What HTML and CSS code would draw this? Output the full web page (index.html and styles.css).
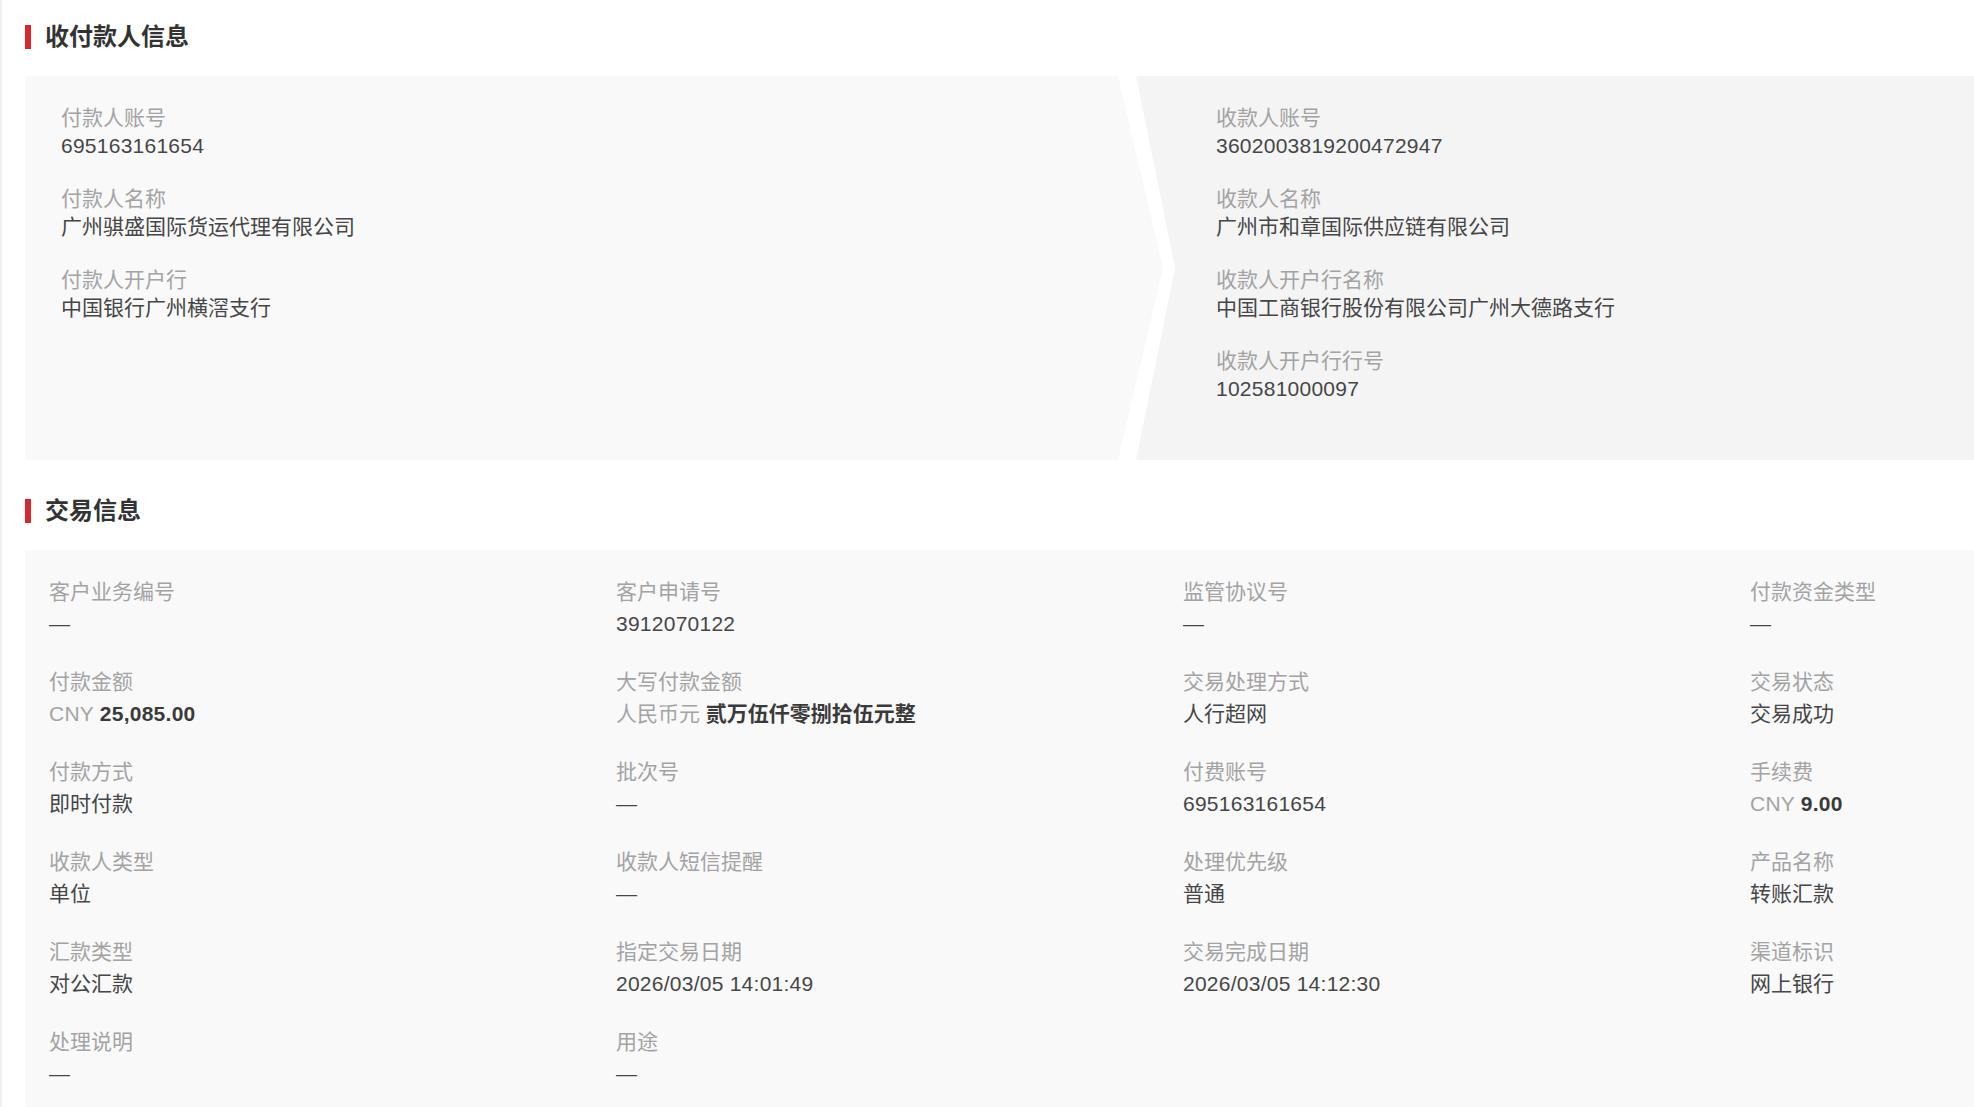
FILE: index.html
```html
<!DOCTYPE html>
<html lang="zh-CN">
<head>
<meta charset="utf-8">
<title>交易详情</title>
<link rel="stylesheet" href="styles.css">
</head>
<body>
<div class="page">
  <h2 class="section-title"><span class="bar"></span>收付款人信息</h2>
  <div class="parties">
    <div class="party party-payer">
      <div class="field"><div class="label">付款人账号</div><div class="value num">695163161654</div></div>
      <div class="field"><div class="label">付款人名称</div><div class="value">广州骐盛国际货运代理有限公司</div></div>
      <div class="field"><div class="label">付款人开户行</div><div class="value">中国银行广州横滘支行</div></div>
    </div>
    <div class="party party-payee">
      <div class="field"><div class="label">收款人账号</div><div class="value num">3602003819200472947</div></div>
      <div class="field"><div class="label">收款人名称</div><div class="value">广州市和章国际供应链有限公司</div></div>
      <div class="field"><div class="label">收款人开户行名称</div><div class="value">中国工商银行股份有限公司广州大德路支行</div></div>
      <div class="field"><div class="label">收款人开户行行号</div><div class="value num">102581000097</div></div>
    </div>
  </div>

  <h2 class="section-title second"><span class="bar"></span>交易信息</h2>
  <div class="trade">
    <div class="cell"><div class="t-label">客户业务编号</div><div class="t-value">—</div></div>
    <div class="cell"><div class="t-label">客户申请号</div><div class="t-value num">3912070122</div></div>
    <div class="cell"><div class="t-label">监管协议号</div><div class="t-value">—</div></div>
    <div class="cell"><div class="t-label">付款资金类型</div><div class="t-value">—</div></div>

    <div class="cell"><div class="t-label">付款金额</div><div class="t-value num"><span class="muted">CNY</span> <b>25,085.00</b></div></div>
    <div class="cell"><div class="t-label">大写付款金额</div><div class="t-value"><span class="muted">人民币元</span> <b>贰万伍仟零捌拾伍元整</b></div></div>
    <div class="cell"><div class="t-label">交易处理方式</div><div class="t-value">人行超网</div></div>
    <div class="cell"><div class="t-label">交易状态</div><div class="t-value">交易成功</div></div>

    <div class="cell"><div class="t-label">付款方式</div><div class="t-value">即时付款</div></div>
    <div class="cell"><div class="t-label">批次号</div><div class="t-value">—</div></div>
    <div class="cell"><div class="t-label">付费账号</div><div class="t-value num">695163161654</div></div>
    <div class="cell"><div class="t-label">手续费</div><div class="t-value num"><span class="muted">CNY</span> <b>9.00</b></div></div>

    <div class="cell"><div class="t-label">收款人类型</div><div class="t-value">单位</div></div>
    <div class="cell"><div class="t-label">收款人短信提醒</div><div class="t-value">—</div></div>
    <div class="cell"><div class="t-label">处理优先级</div><div class="t-value">普通</div></div>
    <div class="cell"><div class="t-label">产品名称</div><div class="t-value">转账汇款</div></div>

    <div class="cell"><div class="t-label">汇款类型</div><div class="t-value">对公汇款</div></div>
    <div class="cell"><div class="t-label">指定交易日期</div><div class="t-value num">2026/03/05 14:01:49</div></div>
    <div class="cell"><div class="t-label">交易完成日期</div><div class="t-value num">2026/03/05 14:12:30</div></div>
    <div class="cell"><div class="t-label">渠道标识</div><div class="t-value">网上银行</div></div>

    <div class="cell"><div class="t-label">处理说明</div><div class="t-value">—</div></div>
    <div class="cell"><div class="t-label">用途</div><div class="t-value">—</div></div>
  </div>
</div>
</body>
</html>
```

FILE: styles.css
```css
html {
  overflow: hidden;
  background: #fff;
}

body {
  margin: 0;
  background: #fff;
  font-family: "Liberation Sans", "Noto Sans CJK SC", sans-serif;
  color: #333;
  border-left: 2px solid #f0f0f0;
  min-height: 1107px;
}

.page {
  width: 2316px;
  padding: 21px 0 40px 23px;
}

.section-title {
  display: flex;
  align-items: center;
  gap: 14px;
  margin: 0 0 23px;
  height: 32px;
  font-size: 24px;
  line-height: 32px;
  font-weight: bold;
  color: #333;
}

.section-title.second {
  margin-top: 35px;
}

.bar {
  display: block;
  width: 6px;
  height: 24px;
  background: #d7282f;
}

.parties {
  display: flex;
  align-items: stretch;
}

.party {
  display: flex;
  flex-direction: column;
  gap: 25px;
  padding: 28px 0 57px;
}

.party-payer {
  flex: 0 0 1138px;
  box-sizing: border-box;
  padding-left: 36px;
  background: #f9f9fa;
  clip-path: polygon(0 0, 1093px 0, 1138px 50%, 1093px 100%, 0 100%);
}

.party-payee {
  flex: 1 1 auto;
  margin-left: -27px;
  padding-left: 80px;
  background: #f4f4f5;
  clip-path: polygon(0 0, 100% 0, 100% 100%, 0 100%, 39px 50%);
}

.label {
  font-size: 21px;
  line-height: 28px;
  color: #a3a3a3;
}

.value {
  font-size: 21px;
  line-height: 28px;
  color: #464646;
}

.num {
  letter-spacing: 0.25px;
}

.trade {
  display: grid;
  grid-template-columns: repeat(4, 1fr);
  row-gap: 26px;
  padding: 26px 24px 40px;
  background: #f9f9fa;
}

.t-label {
  font-size: 21px;
  line-height: 32px;
  color: #a3a3a3;
}

.t-value {
  font-size: 21px;
  line-height: 32px;
  color: #464646;
}

.t-value .muted {
  color: #a3a3a3;
}

.t-value b {
  font-weight: bold;
  color: #3a3a3a;
}
```
